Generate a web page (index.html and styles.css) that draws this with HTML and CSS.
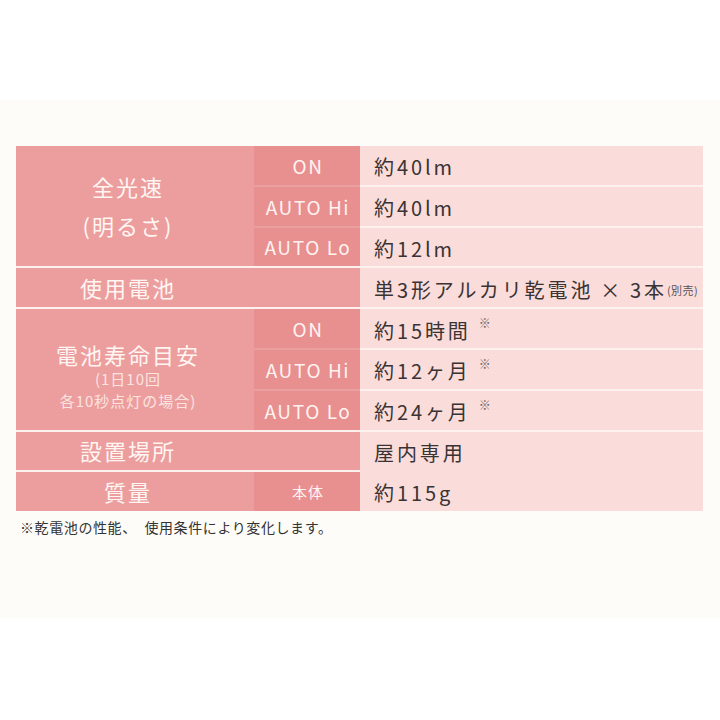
FILE: index.html
```html
<!DOCTYPE html>
<html lang="ja">
<head>
<meta charset="utf-8">
<link rel="stylesheet" href="styles.css">
</head>
<body>
<div class="page">
  <div class="top"></div>
  <section class="band">
    <div class="spec">
      <div class="lab r1-3">
        <div class="main">全光速</div>
        <div class="main">(明るさ)</div>
      </div>
      <div class="modes r1-3">
        <div class="mode">ON</div>
        <div class="mode">AUTO Hi</div>
        <div class="mode">AUTO Lo</div>
      </div>
      <div class="val">約40lm</div>
      <div class="val">約40lm</div>
      <div class="val">約12lm</div>

      <div class="lab wide"><div class="main">使用電池</div></div>
      <div class="val">単3形アルカリ乾電池&thinsp;×&thinsp;3本<span class="small">(別売)</span></div>

      <div class="lab r5-7 life">
        <div class="main">電池寿命目安</div>
        <div class="sub">(1日10回</div>
        <div class="sub">各10秒点灯の場合)</div>
      </div>
      <div class="modes r5-7">
        <div class="mode">ON</div>
        <div class="mode">AUTO Hi</div>
        <div class="mode">AUTO Lo</div>
      </div>
      <div class="val">約15時間<span class="mark">※</span></div>
      <div class="val">約12ヶ月<span class="mark">※</span></div>
      <div class="val">約24ヶ月<span class="mark">※</span></div>

      <div class="lab wide"><div class="main">設置場所</div></div>
      <div class="val pair">
        <div class="line">屋内専用</div>
        <div class="line">約115g</div>
      </div>
      <div class="lab"><div class="main">質量</div></div>
      <div class="modes"><div class="mode body">本体</div></div>
    </div>
    <p class="note">※乾電池の性能、　使用条件により変化します。</p>
  </section>
</div>
</body>
</html>
```

FILE: styles.css
```css
html, body {
  margin: 0;
  padding: 0;
  background: #ffffff;
}
body {
  font-family: "Noto Sans CJK JP", "Noto Sans", sans-serif;
  width: 720px;
  height: 720px;
  overflow: hidden;
}
.top {
  height: 100px;
  background: #ffffff;
}
.band {
  background: #fefcf9;
  height: 472px;
  padding: 46px 17px 0 16px;
}
.spec {
  display: grid;
  grid-template-columns: 238px 106px 343px;
  grid-template-rows: repeat(9, 38.8px);
  row-gap: 2px;
  background: #fdf1ed;
}
.lab {
  grid-column: 1;
  background: #ec9e9e;
  color: #fff6f3;
  display: flex;
  flex-direction: column;
  justify-content: center;
  align-items: center;
  padding-right: 14px;
}
.lab.wide {
  grid-column: 1 / span 2;
  padding-right: 120px;
}
.r1-3 { grid-row: 1 / span 3; }
.r5-7 { grid-row: 5 / span 3; }
.main {
  font-size: 22px;
  letter-spacing: 2px;
  line-height: 39px;
}
.life {
  padding-top: 14px;
}
.life .main {
  line-height: 28px;
}
.sub {
  font-size: 15px;
  letter-spacing: 1px;
  line-height: 22px;
  color: #fbe4e0;
}
.modes {
  grid-column: 2;
  background: #e88f90;
  display: flex;
  flex-direction: column;
}
.mode {
  flex: 1;
  display: flex;
  align-items: center;
  justify-content: center;
  color: #fff3f0;
  font-size: 19px;
  letter-spacing: 1.6px;
  padding-left: 2px;
}
.mode + .mode {
  border-top: 2px solid #eba0a0;
}
.mode.body {
  font-size: 15px;
  letter-spacing: 1px;
}
.val {
  grid-column: 3;
  background: #fadcdb;
  color: #3a3333;
  font-size: 20px;
  letter-spacing: 2.9px;
  display: flex;
  align-items: center;
  padding-left: 14px;
  padding-top: 3px;
}
.val.pair {
  grid-row: 8 / span 2;
  flex-direction: column;
  align-items: stretch;
  padding-top: 0;
}
.line {
  flex: 1;
  display: flex;
  align-items: center;
  padding-top: 3px;
}
.small {
  font-size: 11px;
  letter-spacing: 0.5px;
  color: #5a5050;
  align-self: flex-end;
  margin-bottom: 9px;
  margin-left: 0;
}
.mark {
  font-size: 12px;
  color: #6a6262;
  align-self: flex-start;
  margin-top: 2px;
  margin-left: 8px;
}
.note {
  margin: 7px 0 0 4px;
  font-size: 14px;
  letter-spacing: 0.6px;
  line-height: 18px;
  color: #333333;
  white-space: nowrap;
}
```
